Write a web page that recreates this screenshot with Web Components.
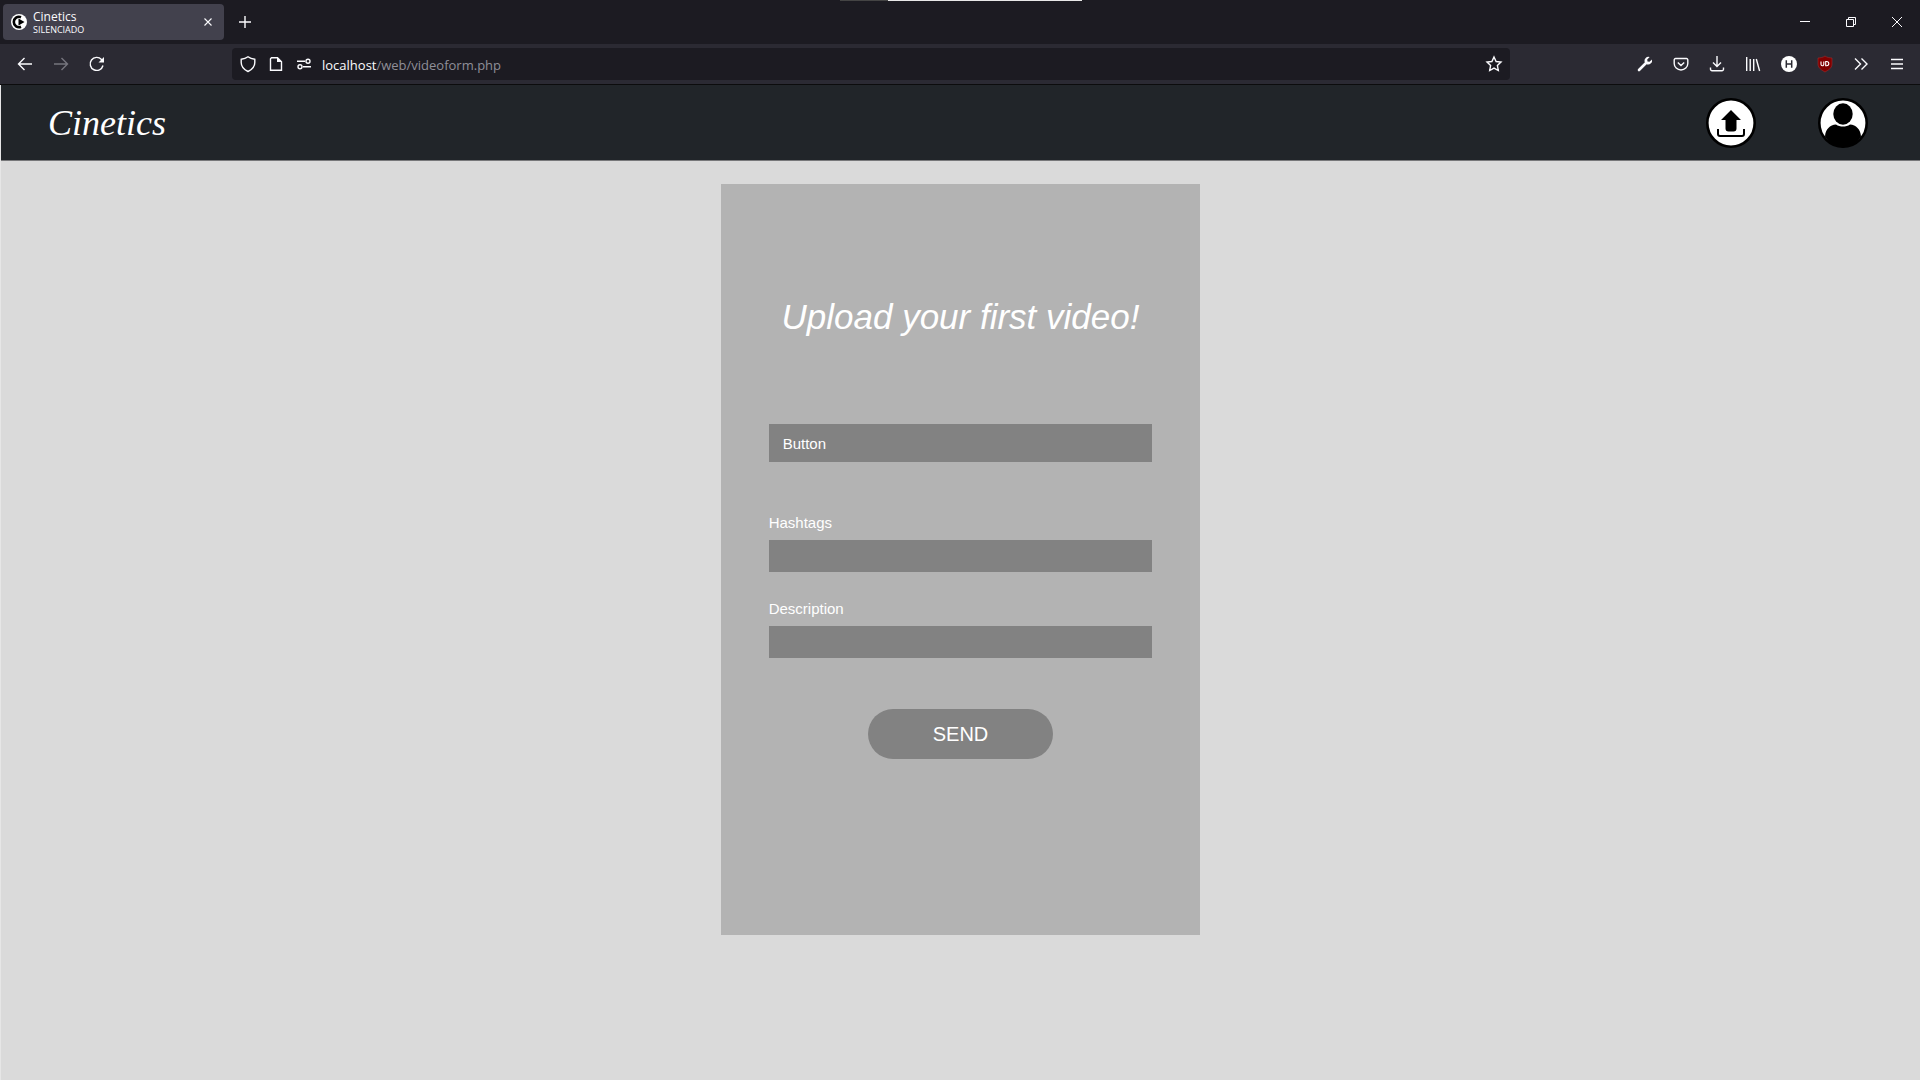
<!DOCTYPE html>
<html lang="en">
<head>
<meta charset="utf-8">
<title>Cinetics</title>
<style>
  html, body { height: 100%; margin: 0; }
  body { display: flex; flex-direction: column; background: #dadada; font-family: "Open Sans", "Noto Sans", sans-serif; }
  cinetics-page { flex: 1; }
</style>
</head>
<body>
<browser-chrome>
  <browser-tab slot="tab" status="SILENCIADO">Cinetics</browser-tab>
  <browser-toolbar slot="toolbar" host="localhost" path="/web/videoform.php"></browser-toolbar>
</browser-chrome>
<cinetics-page>
  <cinetics-header slot="header">Cinetics</cinetics-header>
  <upload-form>
    <span slot="title">Upload your first video!</span>
    <upload-picker slot="file">Button</upload-picker>
    <text-field label="Hashtags"></text-field>
    <text-field label="Description"></text-field>
    <pill-button slot="action">SEND</pill-button>
  </upload-form>
</cinetics-page>

<script>
const define = (name, render) => customElements.define(name, class extends HTMLElement {
  connectedCallback() {
    if (this.shadowRoot) return;
    const t = document.createElement('template');
    t.innerHTML = render(this);
    this.attachShadow({ mode: 'open' }).append(t.content.cloneNode(true));
  }
});

const icons = {
  back: '<path d="M15 8H1.500M7.500 2 1.500 8l6 6"/>',
  forward: '<path d="M1 8h13.500M8.500 2l6 6-6 6"/>',
  reload: '<path d="M14 9.500A6.500 6.500 0 1 1 12.500 3.500L14 5"/><path d="M15 1v5.500H9.500z" fill="currentColor" stroke="none"/>',
  shield: '<path d="M8 .8C6 2.300 3.800 3 1.200 3.300v3.200c0 4 2.600 7 6.800 9 4.200-2 6.800-5 6.800-9V3.300C12.200 3 10 2.300 8 .8z"/>',
  page: '<path d="M3.500 1.700h6l4 4v8.600h-11V2.700z"/><path d="M9 1l5 5H9z" fill="currentColor" stroke="none"/>',
  sliders: '<path d="M1 5.200h8M7 10.800h8"/><circle cx="12" cy="5.200" r="2"/><circle cx="4" cy="10.800" r="2"/>',
  star: '<path d="m8 1 2.100 4.500 4.900.6-3.600 3.400.9 5L8 12.100 3.700 14.500l.9-5L1 6.100l4.900-.6z"/>',
  wrench: '<path d="M2 14 9 7" stroke-width="2.600" stroke-linecap="round"/><path d="M12.700 1.100A4 4 0 0 0 7.600 6l2.400 2.400a4 4 0 0 0 4.900-5L12.500 5.800l-2-.3-.3-2z" fill="currentColor" stroke="none"/>',
  pocket: '<path d="M2.500 2.500h11a1.300 1.300 0 0 1 1.300 1.300V7.500a6.800 6.500 0 0 1-13.600 0V3.800a1.300 1.300 0 0 1 1.300-1.300zM4.800 6.500 8 9.500l3.200-3"/>',
  download: '<path d="M8 0v10M4 6.500l4 4 4-4M1.500 11.500v1.700a1.500 1.500 0 0 0 1.500 1.500h10a1.500 1.500 0 0 0 1.500-1.500v-1.700"/>',
  library: '<path d="M1.700 1v14M5.200 3v12M8.700 3v12M11.300 3l3.300 12"/>',
  h: '<circle cx="8" cy="8" r="8" fill="#fff" stroke="none"/><path d="M5.300 4.200v7.600M10.700 4.200v7.600M5.300 8h5.400" stroke="#2b2a33" stroke-width="1.500"/>',
  ublock: '<path d="M8 0C6 1.500 3.500 1.800 1 2v6c0 4 3.500 6 7 8 3.500-2 7-4 7-8V2C12.500 1.800 10 1.500 8 0z" fill="#800000" stroke="#a33" stroke-width=".5"/><path d="M4 5.500v2.800a1.400 1.400 0 0 0 2.800 0V5.500M8.700 5.500v4.200h1a2.100 2.100 0 0 0 0-4.200z" stroke="#fff" stroke-width="1.100"/>',
  more: '<path d="M2 2.500 7.500 8 2 13.500M8.500 2.500 14 8l-5.500 5.500"/>',
  menu: '<path d="M2 3.500h12M2 8h12M2 12.500h12"/>',
  close: '<path d="m4.500 4.500 7 7M11.500 4.500l-7 7" stroke-width="1.100"/>',
  plus: '<path d="M8 2v12M2 8h12"/>',
  minimize: '<path d="M3 7.500h10" stroke-width="1"/>',
  restore: '<path d="M3.500 5.500h7v7h-7zM5.500 5.500v-2h7v7h-2" stroke-width="1"/>',
  quit: '<path d="m3 3 10 10M13 3 3 13" stroke-width="1"/>'
};

define('ui-icon', el => `
  <style>
    :host { display: block; width: 16px; height: 16px; }
    svg { display: block; width: 100%; height: 100%; fill: none; stroke: currentColor; stroke-width: 1.4; overflow: visible; }
  </style>
  <svg viewBox="0 0 16 16" aria-hidden="true">${icons[el.getAttribute('name')]}</svg>`);

define('icon-button', el => `
  <style>
    :host { display: block; flex: none; width: 36px; height: 32px; color: #fbfbfe; }
    :host([dim]) { color: #76757e; }
    button { display: flex; align-items: center; justify-content: center; width: 100%; height: 100%; padding: 0; border: 0; background: none; color: inherit; }
  </style>
  <button type="button" aria-label="${el.getAttribute('label')}"><ui-icon name="${el.getAttribute('icon')}"></ui-icon></button>`);

define('browser-chrome', () => `
  <style>
    :host { display: block; position: relative; background: #1c1b22; border-bottom: 1px solid #0c0c0d; }
    .tabs { display: flex; align-items: center; height: 44px; padding-left: 3px; }
    .new { margin-left: 3px; }
    .window { display: flex; margin-left: auto; }
    .window icon-button { width: 46px; }
    .handle { position: absolute; top: 0; left: 50%; display: flex; width: 242px; height: 1px; margin-left: -120px; background: #e8e8e8; }
    .handle::before { content: ""; width: 48px; background: #444; }
  </style>
  <div class="tabs">
    <slot name="tab"></slot>
    <icon-button class="new" icon="plus" label="New tab"></icon-button>
    <div class="window">
      <icon-button icon="minimize" label="Minimize"></icon-button>
      <icon-button icon="restore" label="Restore"></icon-button>
      <icon-button icon="quit" label="Close"></icon-button>
    </div>
  </div>
  <div class="handle"></div>
  <slot name="toolbar"></slot>`);

define('browser-tab', el => `
  <style>
    :host { display: flex; align-items: center; box-sizing: border-box; width: 221px; height: 36px; padding-left: 8px; border-radius: 4px; background: #42414d; color: #fbfbfe; }
    svg { width: 16px; height: 16px; margin-right: 6px; }
    .text { display: flex; flex-direction: column; flex: 1; padding-top: 2px; }
    .name { font-size: 12px; line-height: 14px; }
    .status { font-size: 9px; line-height: 12px; }
    icon-button { width: 32px; }
  </style>
  <svg viewBox="0 0 16 16" aria-hidden="true"><circle cx="8" cy="8" r="8" fill="#fff"/><path d="M10 3.200A5.200 5.200 0 1 0 10 12.800" fill="none" stroke="#000" stroke-width="2.600"/><path d="M7.500 4.500v7l6-3.500z"/></svg>
  <div class="text"><span class="name"><slot></slot></span><span class="status">${el.getAttribute('status')}</span></div>
  <icon-button icon="close" label="Close tab"></icon-button>`);

define('browser-toolbar', el => `
  <style>
    :host { display: flex; align-items: center; height: 40px; padding: 0 5px 0 7px; background: #2b2a33; }
    .group { display: flex; }
    .address { display: flex; align-items: center; flex: 1; height: 32px; margin: 0 117px; padding-left: 2px; border-radius: 4px; background: #1c1b22; }
    .address icon-button { width: 28px; }
    .address .star { width: 32px; }
    .url { flex: 1; margin-left: 4px; padding-top: 2px; font-size: 13px; line-height: 20px; color: #8f8f98; }
    b { font-weight: 400; color: #fbfbfe; }
  </style>
  <div class="group">
    <icon-button icon="back" label="Back"></icon-button>
    <icon-button icon="forward" label="Forward" dim></icon-button>
    <icon-button icon="reload" label="Reload"></icon-button>
  </div>
  <div class="address">
    <icon-button icon="shield" label="Protection"></icon-button>
    <icon-button icon="page" label="Site information"></icon-button>
    <icon-button icon="sliders" label="Permissions"></icon-button>
    <div class="url" role="textbox" contenteditable="true" spellcheck="false" aria-label="Address"><b>${el.getAttribute('host')}</b>${el.getAttribute('path')}</div>
    <icon-button class="star" icon="star" label="Bookmark"></icon-button>
  </div>
  <div class="group">
    <icon-button icon="wrench" label="Developer tools"></icon-button>
    <icon-button icon="pocket" label="Pocket"></icon-button>
    <icon-button icon="download" label="Downloads"></icon-button>
    <icon-button icon="library" label="Library"></icon-button>
    <icon-button icon="h" label="H extension"></icon-button>
    <icon-button icon="ublock" label="Content blocker"></icon-button>
    <icon-button icon="more" label="More tools"></icon-button>
    <icon-button icon="menu" label="Menu"></icon-button>
  </div>`);

define('cinetics-page', () => `
  <style>
    :host { display: flex; flex-direction: column; border-left: 1px solid #e6e6e6; background: #dadada; color: #fff; font-family: "Liberation Sans", Arial, sans-serif; }
    main { display: flex; justify-content: center; padding: 23px 0; }
  </style>
  <slot name="header"></slot>
  <main><slot></slot></main>`);

define('cinetics-header', () => `
  <style>
    :host { display: flex; align-items: center; justify-content: space-between; height: 75px; padding: 0 52px 0 47px; background: #212529; border-bottom: 1px solid #77787a; }
    a { color: #fff; text-decoration: none; }
    .brand { font: italic 36px/44px "Liberation Serif", serif; }
    nav { display: flex; gap: 62px; }
    svg { display: block; width: 50px; height: 50px; }
  </style>
  <a class="brand" href="#"><slot></slot></a>
  <nav>
    <a href="#upload" aria-label="Upload"><svg viewBox="0 0 50 50"><circle cx="25" cy="25" r="23.700" fill="#fff" stroke="#000" stroke-width="2.600"/><path d="M25 12 35 22H30.500V30.500a3 3 0 0 1-3 3h-5a3 3 0 0 1-3-3V22H15z"/><path d="M12 31v5a2 2 0 0 0 2 2h22a2 2 0 0 0 2-2v-5" fill="none" stroke="#000" stroke-width="2"/></svg></a>
    <a href="#profile" aria-label="Profile"><svg viewBox="0 0 50 50"><circle cx="25" cy="25" r="23.700" fill="#fff" stroke="#000" stroke-width="2.600"/><ellipse cx="25" cy="16" rx="9.700" ry="10.700"/><path d="M7 38.500C7.500 31 12 27 18 26.500c4 2.700 10 2.700 14 0 6 .5 10.500 4.500 11 12A23 23 0 0 1 25 49.500 23 23 0 0 1 7 38.500z"/></svg></a>
  </nav>`);

define('upload-form', () => `
  <style>
    :host { display: block; box-sizing: border-box; width: 25%; min-width: 440px; padding: 113px 48px 176px; background: #b3b3b3; }
    h1 { margin: 0 0 87px; font-size: 35px; font-weight: 400; font-style: italic; line-height: 40px; text-align: center; white-space: nowrap; }
    form { display: flex; flex-direction: column; }
    .fields { display: flex; flex-direction: column; gap: 26px; margin: 50px 0 51px; }
  </style>
  <h1><slot name="title"></slot></h1>
  <form>
    <slot name="file"></slot>
    <div class="fields"><slot></slot></div>
    <slot name="action"></slot>
  </form>`);

define('upload-picker', () => `
  <style>
    :host { display: block; }
    button { display: block; width: 100%; height: 38px; padding: 2px 14px 0; border: 0; background: #828282; color: #fff; font: 15px/22px "Liberation Sans", sans-serif; text-align: left; }
  </style>
  <button type="button"><slot></slot></button>`);

define('text-field', el => `
  <style>
    :host { display: block; }
    label { display: block; margin-bottom: 6px; font: 15px/22px "Liberation Sans", sans-serif; }
    input { display: block; box-sizing: border-box; width: 100%; height: 32px; padding: 0 12px; border: 0; border-radius: 0; background: #828282; color: #fff; font: inherit; }
  </style>
  <label for="f">${el.getAttribute('label')}</label>
  <input id="f" type="text">`);

define('pill-button', () => `
  <style>
    :host { display: flex; justify-content: center; }
    button { width: 185px; height: 50px; padding: 0; border: 0; border-radius: 25px; background: #828282; color: #fff; font: 20px/24px "Liberation Sans", sans-serif; }
  </style>
  <button type="submit"><slot></slot></button>`);
</script>
</body>
</html>
